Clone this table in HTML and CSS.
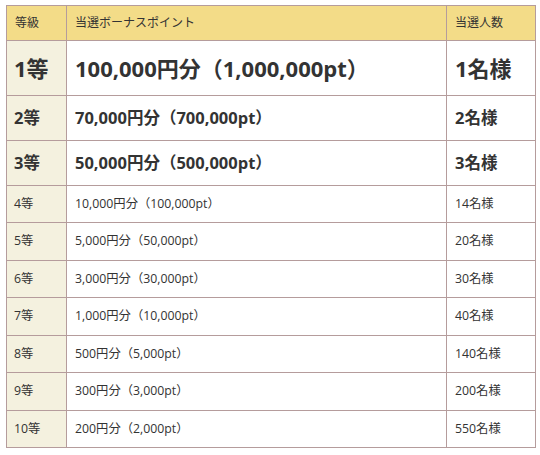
FILE: index.html
```html
<!DOCTYPE html>
<html lang="ja">
<head>
<meta charset="utf-8">
<link rel="stylesheet" href="styles.css">
</head>
<body>
<div class="wrap">
<table class="prize">
<colgroup><col class="c1"><col class="c2"><col class="c3"></colgroup>
<thead>
<tr class="head"><th>等級</th><th>当選ボーナスポイント</th><th>当選人数</th></tr>
</thead>
<tbody>
<tr class="big"><td class="rank">1等</td><td>100,000円分（1,000,000pt）</td><td>1名様</td></tr>
<tr class="mid"><td class="rank">2等</td><td>70,000円分（700,000pt）</td><td>2名様</td></tr>
<tr class="mid"><td class="rank">3等</td><td>50,000円分（500,000pt）</td><td>3名様</td></tr>
<tr class="sm a"><td class="rank">4等</td><td>10,000円分（100,000pt）</td><td>14名様</td></tr>
<tr class="sm b"><td class="rank">5等</td><td>5,000円分（50,000pt）</td><td>20名様</td></tr>
<tr class="sm a"><td class="rank">6等</td><td>3,000円分（30,000pt）</td><td>30名様</td></tr>
<tr class="sm b"><td class="rank">7等</td><td>1,000円分（10,000pt）</td><td>40名様</td></tr>
<tr class="sm a"><td class="rank">8等</td><td>500円分（5,000pt）</td><td>140名様</td></tr>
<tr class="sm b"><td class="rank">9等</td><td>300円分（3,000pt）</td><td>200名様</td></tr>
<tr class="sm a"><td class="rank">10等</td><td>200円分（2,000pt）</td><td>550名様</td></tr>
</tbody>
</table>
</div>
</body>
</html>
```
FILE: styles.css
```css
html, body {
  margin: 0;
  padding: 0;
  background: #ffffff;
}
.wrap {
  padding: 5px 6px;
}
.prize {
  border-collapse: collapse;
  table-layout: fixed;
  width: 529px;
  font-family: "Open Sans", "Noto Sans CJK JP", sans-serif;
  color: #333333;
}
.c1 { width: 60px; }
.c2 { width: 380px; }
.c3 { width: 89px; }
.prize th,
.prize td {
  border: 1px solid #b59c9c;
  padding: 0 8px;
  text-align: left;
  vertical-align: middle;
  line-height: 1.2;
  white-space: nowrap;
}
.prize th {
  background: #f3dc88;
  font-size: 12px;
  font-weight: normal;
  height: 35px;
  box-sizing: border-box;
}
.prize td.rank {
  background: #f4f1df;
  padding-left: 7px;
}
.big td {
  font-size: 22px;
  font-weight: bold;
  height: 54px;
}
.mid td {
  font-size: 16.5px;
  font-weight: bold;
  height: 44px;
}
.sm td {
  font-size: 12.3px;
  height: 36px;
}
.sm.b td {
  height: 37px;
}
```
